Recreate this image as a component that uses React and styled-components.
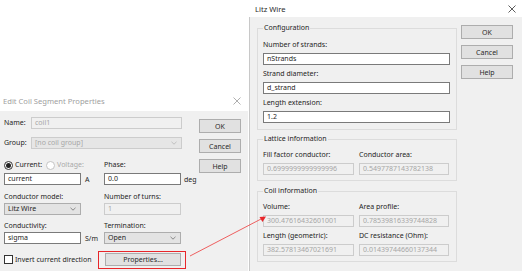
import React from "react";
import styled, { createGlobalStyle } from "styled-components";

const Global = createGlobalStyle`
  html, body { margin: 0; padding: 0; background: #ffffff; }
  body { width: 522px; height: 271px; overflow: hidden; position: relative;
    font-family: "Noto Sans", "Open Sans", sans-serif; font-size: 7px; color: #1e1e1e; }
  * { box-sizing: border-box; }
`;

const Desktop = styled.div`
  position: relative;
  width: 522px;
  height: 271px;
  background: #ffffff;
  overflow: hidden;
`;

const Window = styled.div`
  position: absolute;
  left: ${p => p.$x}px;
  top: ${p => p.$y}px;
  width: ${p => p.$w}px;
  height: ${p => p.$h}px;
  display: flex;
  flex-direction: column;
`;

const TitleBar = styled.div`
  height: ${p => p.$h}px;
  flex: none;
  background: #ffffff;
  display: flex;
  align-items: center;
  justify-content: space-between;
  padding: 0 ${p => p.$pr}px 0 ${p => p.$pl}px;
  font-size: ${p => p.$fs}px;
  color: ${p => (p.$active ? "#2a2a2a" : "#a0a0a0")};
`;

const CloseX = ({ color }) => (
  <svg width="8" height="8" viewBox="0 0 8 8">
    <path d="M0.5 0.5 L7.5 7.5 M7.5 0.5 L0.5 7.5" stroke={color} strokeWidth="0.8" fill="none" />
  </svg>
);

const Body = styled.div`
  flex: 1;
  background: #f0f0f0;
  display: flex;
  align-items: flex-start;
  padding: ${p => p.$pt}px 0 0 ${p => p.$pl}px;
  border-left: ${p => (p.$border ? "1px solid #c8c8c8" : "none")};
`;

const Form = styled.div`
  width: ${p => p.$w}px;
  display: flex;
  flex-direction: column;
`;

const ButtonColumn = styled.div`
  margin-left: ${p => p.$ml}px;
  margin-top: ${p => p.$mt}px;
  display: flex;
  flex-direction: column;
  gap: 6px;
`;

const Button = styled.div`
  width: ${p => p.$w}px;
  height: ${p => p.$h || 14}px;
  background: #e1e1e1;
  border: 1px solid #adadad;
  display: flex;
  align-items: center;
  justify-content: center;
  color: #2a2a2a;
`;

const Row = styled.div`
  display: flex;
  align-items: center;
  height: ${p => p.$h || 12}px;
  margin-top: ${p => p.$mt || 0}px;
`;

const Label = styled.span`
  display: inline-block;
  width: ${p => (p.$w ? `${p.$w}px` : "auto")};
  color: ${p => (p.$muted ? "#a8a8a8" : "#1e1e1e")};
  white-space: nowrap;
  line-height: 12px;
`;

const Cell = styled.div`
  width: ${p => p.$w}px;
  flex: none;
  display: flex;
  align-items: center;
  height: 100%;
  position: relative;
`;

const Unit = styled.span`
  width: ${p => p.$w}px;
  flex: none;
  padding-left: ${p => p.$pl}px;
  white-space: nowrap;
`;

const Field = styled.div`
  width: ${p => (p.$w ? `${p.$w}px` : "100%")};
  height: 12px;
  flex: none;
  border: 1px solid ${p => (p.$disabled ? "#cccccc" : p.$combo ? "#adadad" : "#7a7a7a")};
  background: ${p => (p.$combo ? (p.$disabled ? "#e6e6e6" : "#e3e3e3") : p.$disabled ? "#f0f0f0" : "#ffffff")};
  color: ${p => (p.$disabled ? "#a6a6a6" : "#1e1e1e")};
  display: flex;
  align-items: center;
  justify-content: space-between;
  padding: 0 4px 0 3px;
  line-height: 10px;
  white-space: nowrap;
  overflow: hidden;
`;

const Chevron = ({ color = "#606060" }) => (
  <svg width="6" height="4" viewBox="0 0 6 4">
    <path d="M0.5 0.8 L3 3.2 L5.5 0.8" stroke={color} strokeWidth="0.7" fill="none" />
  </svg>
);

const Radio = styled.span`
  width: 9px;
  height: 9px;
  border-radius: 50%;
  border: 1px solid ${p => (p.$checked ? "#333333" : "#c4c4c4")};
  background: #ffffff;
  display: inline-flex;
  align-items: center;
  justify-content: center;
  margin-right: 2px;
  margin-left: ${p => p.$ml || 0}px;
  flex: none;
  &::after {
    content: "";
    width: 5px;
    height: 5px;
    border-radius: 50%;
    background: ${p => (p.$checked ? "#222222" : "transparent")};
  }
`;

const Check = styled.span`
  width: 9px;
  height: 9px;
  border: 1px solid #333333;
  background: #ffffff;
  margin-right: 2px;
  flex: none;
`;

const Highlight = styled.div`
  position: relative;
  display: flex;
  &::after {
    content: "";
    position: absolute;
    left: -7px;
    right: -5px;
    top: -2px;
    bottom: -3px;
    border: 1.5px solid #e8262a;
    pointer-events: none;
  }
`;

/* Right dialog parts */
const Groups = styled.div`
  width: 200px;
  display: flex;
  flex-direction: column;
`;

const GroupBox = styled.div`
  position: relative;
  border: 1px solid #dcdcdc;
  margin-top: ${p => p.$mt}px;
  padding: ${p => p.$pt}px 6px ${p => p.$pb}px 5px;
  display: flex;
  flex-direction: column;
  gap: ${p => p.$gap}px;
`;

const Legend = styled.span`
  position: absolute;
  left: 5px;
  top: -7px;
  padding: 0 1px;
  line-height: 12px;
  background: #f0f0f0;
  white-space: nowrap;
`;

const FieldBlock = styled.div`
  display: flex;
  flex-direction: column;
  gap: ${p => p.$gap ?? 2}px;
`;

const Pair = styled.div`
  display: grid;
  grid-template-columns: 91px 90px;
  column-gap: 5px;
  row-gap: ${p => p.$rg}px;
`;

const Overlay = styled.svg`
  position: absolute;
  left: 0;
  top: 0;
  pointer-events: none;
`;

const TextField = ({ label, value, disabled, gap }) => (
  <FieldBlock $gap={gap}>
    <Label>{label}</Label>
    <Field $disabled={disabled}>{value}</Field>
  </FieldBlock>
);

export default function App() {
  return (
    <Desktop>
      <Global />

      {/* Edit Coil Segment Properties (inactive) */}
      <Window $x={0} $y={90} $w={248} $h={181}>
        <TitleBar $h={21} $pl={3} $pr={7} $fs={7.6}>
          <span>Edit Coil Segment Properties</span>
          <CloseX color="#9a9a9a" />
        </TitleBar>
        <Body $pt={6} $pl={4}>
          <Form $w={178}>
            <Row>
              <Label $w={27}>Name:</Label>
              <Field $w={151} $disabled>coil1</Field>
            </Row>
            <Row $mt={8}>
              <Label $w={27}>Group:</Label>
              <Field $w={151} $disabled $combo>
                <span>[no coil group]</span>
                <Chevron color="#b0b0b0" />
              </Field>
            </Row>

            <Row $mt={10}>
              <Cell $w={100}>
                <Radio $checked />
                <Label>Current:</Label>
                <Radio $ml={4} />
                <Label $muted>Voltage:</Label>
              </Cell>
              <Cell $w={77}>
                <Label>Phase:</Label>
              </Cell>
            </Row>
            <Row $mt={2}>
              <Cell $w={77}><Field>current</Field></Cell>
              <Unit $w={23} $pl={4}>A</Unit>
              <Cell $w={77}><Field>0.0</Field></Cell>
              <Unit $w={20} $pl={3}>deg</Unit>
            </Row>

            <Row $mt={6}>
              <Cell $w={100}><Label>Conductor model:</Label></Cell>
              <Cell $w={77}><Label>Number of turns:</Label></Cell>
            </Row>
            <Row>
              <Cell $w={77}>
                <Field $combo>
                  <span>Litz Wire</span>
                  <Chevron />
                </Field>
              </Cell>
              <Unit $w={23} $pl={4} />
              <Cell $w={77}><Field $disabled>1</Field></Cell>
            </Row>

            <Row $mt={5}>
              <Cell $w={100}><Label>Conductivity:</Label></Cell>
              <Cell $w={77}><Label>Termination:</Label></Cell>
            </Row>
            <Row>
              <Cell $w={77}><Field>sigma</Field></Cell>
              <Unit $w={23} $pl={4}>S/m</Unit>
              <Cell $w={77}>
                <Field $combo>
                  <span>Open</span>
                  <Chevron />
                </Field>
              </Cell>
            </Row>

            <Row $mt={9} $h={13}>
              <Cell $w={101}>
                <Check />
                <Label>Invert current direction</Label>
              </Cell>
              <Cell $w={76}>
                <Highlight>
                  <Button $w={76} $h={13}>Properties...</Button>
                </Highlight>
              </Cell>
            </Row>
          </Form>
          <ButtonColumn $ml={17} $mt={2}>
            <Button $w={42}>OK</Button>
            <Button $w={42}>Cancel</Button>
            <Button $w={42}>Help</Button>
          </ButtonColumn>
        </Body>
      </Window>

      {/* Litz Wire (active) */}
      <Window $x={249} $y={0} $w={273} $h={271}>
        <TitleBar $h={17} $pl={6} $pr={6} $fs={7.6} $active>
          <span>Litz Wire</span>
          <CloseX color="#333333" />
        </TitleBar>
        <Body $pt={11} $pl={7} $border>
          <Groups>
            <GroupBox $mt={0} $pt={10} $pb={6} $gap={3}>
              <Legend>Configuration</Legend>
              <TextField label="Number of strands:" value="nStrands" />
              <TextField label="Strand diameter:" value="d_strand" />
              <TextField label="Length extension:" value="1.2" />
            </GroupBox>
            <GroupBox $mt={9} $pt={9} $pb={5} $gap={3}>
              <Legend>Lattice information</Legend>
              <Pair $rg={3}>
                <TextField label="Fill factor conductor:" value="0.6999999999999996" disabled />
                <TextField label="Conductor area:" value="0.5497787143782138" disabled />
              </Pair>
            </GroupBox>
            <GroupBox $mt={10} $pt={9} $pb={5} $gap={3}>
              <Legend>Coil information</Legend>
              <Pair $rg={3}>
                <TextField label="Volume:" value="300.47616432601001" disabled />
                <TextField label="Area profile:" value="0.78539816339744828" disabled />
                <TextField label="Length (geometric):" value="382.57813467021691" disabled />
                <TextField label="DC resistance (Ohm):" value="0.01439744660137344" disabled />
              </Pair>
            </GroupBox>
          </Groups>
          <ButtonColumn $ml={4} $mt={-3}>
            <Button $w={52}>OK</Button>
            <Button $w={52}>Cancel</Button>
            <Button $w={52}>Help</Button>
          </ButtonColumn>
        </Body>
      </Window>

      <Overlay width="522" height="271" viewBox="0 0 522 271">
        <line x1="190" y1="256" x2="262" y2="218.5" stroke="#ee3a3a" strokeWidth="0.8" />
        <polygon points="266,216.5 259.5,217 262.5,222" fill="#e8262a" />
      </Overlay>
    </Desktop>
  );
}
